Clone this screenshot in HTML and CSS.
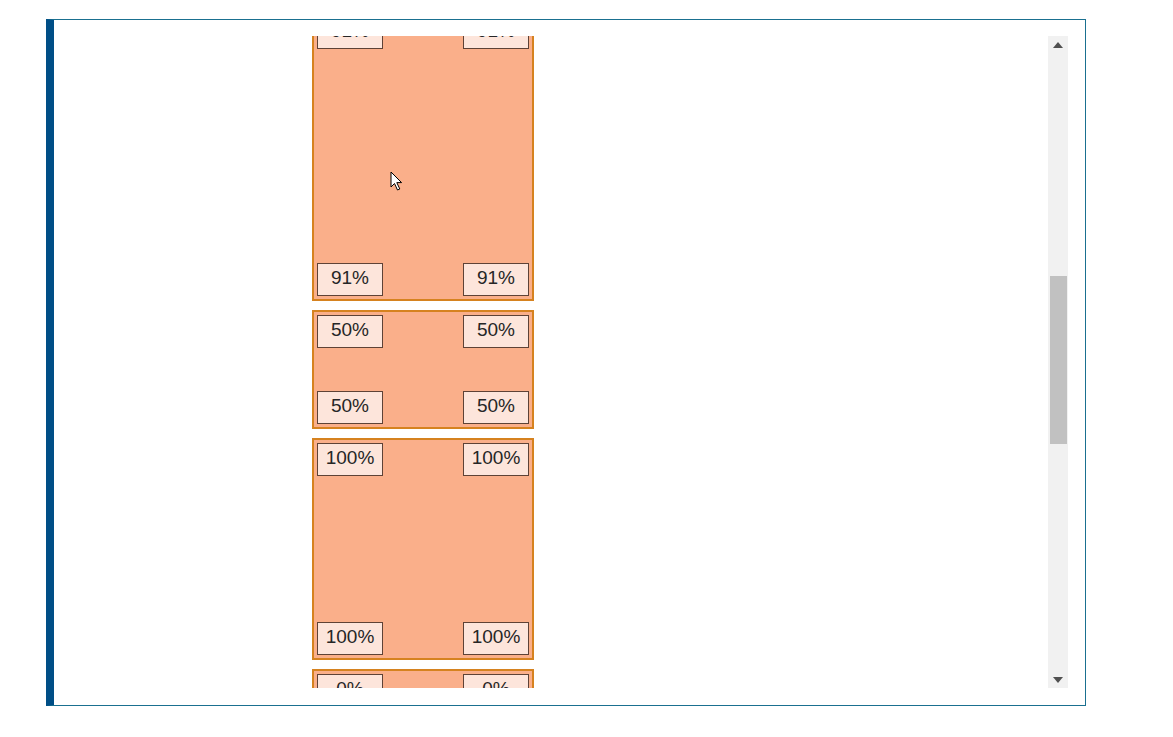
FILE: index.html
```html
<!DOCTYPE html>
<html lang="en">

<head>
    <meta charset="UTF-8">
    <meta name="viewport" content="width=device-width, initial-scale=1.0">
    <title>Corner Labels</title>
    <link rel="stylesheet" href="styles.css">
</head>

<body>

    <div id="frame">
        <!-- the scrolled list of boxes, already moved down a bit -->
        <div id="viewport">
            <div id="list">
                <div class="card" style="height: 290px;">
                    <div class="row">
                        <span class="tag">91%</span>
                        <span class="tag">91%</span>
                    </div>
                    <div class="row">
                        <span class="tag">91%</span>
                        <span class="tag">91%</span>
                    </div>
                </div>
                <div class="card" style="height: 119px;">
                    <div class="row">
                        <span class="tag">50%</span>
                        <span class="tag">50%</span>
                    </div>
                    <div class="row">
                        <span class="tag">50%</span>
                        <span class="tag">50%</span>
                    </div>
                </div>
                <div class="card" style="height: 222px;">
                    <div class="row">
                        <span class="tag">100%</span>
                        <span class="tag">100%</span>
                    </div>
                    <div class="row">
                        <span class="tag">100%</span>
                        <span class="tag">100%</span>
                    </div>
                </div>
                <div class="card" style="height: 119px;">
                    <div class="row">
                        <span class="tag">0%</span>
                        <span class="tag">0%</span>
                    </div>
                    <div class="row">
                        <span class="tag">0%</span>
                        <span class="tag">0%</span>
                    </div>
                </div>
            </div>
            <!-- mouse pointer caught in the shot -->
            <svg class="pointer" width="14" height="21" viewBox="0 0 14 21">
                <path d="M1 1 L1 16 L4.5 12.5 L7.5 19 L9.8 18 L6.8 11.6 L11.6 11.6 Z" fill="#fff" stroke="#000" stroke-width="1" stroke-linejoin="round"/>
            </svg>
        </div>
        <!-- our scrollbar drawn by hand -->
        <div id="scrollbar">
            <div class="arrow">
                <svg width="10" height="6" viewBox="0 0 10 6"><path d="M0 6 L5 0 L10 6 Z" fill="#505050"/></svg>
            </div>
            <div class="track">
                <div class="thumb"></div>
            </div>
            <div class="arrow">
                <svg width="10" height="6" viewBox="0 0 10 6"><path d="M0 0 L10 0 L5 6 Z" fill="#505050"/></svg>
            </div>
        </div>
    </div>

</body>

</html>
```

FILE: styles.css
```css
body {
    margin: 0;
    padding: 19px 0 0 46px;
    background-color: #ffffff;
    font-family: "Liberation Sans", Arial, sans-serif;
}

/* outer frame with the thick blue bar on the left */
#frame {
    width: 1014px;
    height: 652px;
    border: 1px solid #1a7090;
    border-left: 8px solid #004e86;
    padding: 16px 17px 17px 0;
    display: flex;
}

#viewport {
    flex: 1;
    overflow: hidden;
    position: relative;
}

#list {
    margin-top: -25px;
    padding-left: 258px;
    display: flex;
    flex-direction: column;
    gap: 9px;
}

/* one salmon box */
.card {
    width: 222px;
    box-sizing: border-box;
    background-color: #faaf8a;
    border: 2px solid #d6821f;
    padding: 3px;
    display: flex;
    flex-direction: column;
    justify-content: space-between;
}

.row {
    display: flex;
    justify-content: space-between;
}

/* small percent labels in the corners */
.tag {
    width: 66px;
    height: 33px;
    box-sizing: border-box;
    background-color: #fde5db;
    border: 1px solid #5e4236;
    color: #262626;
    font-size: 19px;
    line-height: 27px;
    text-align: center;
}

.pointer {
    position: absolute;
    left: 336px;
    top: 135px;
}

#scrollbar {
    width: 20px;
    background-color: #f1f1f1;
    display: flex;
    flex-direction: column;
}

.arrow {
    height: 17px;
    display: flex;
    align-items: center;
    justify-content: center;
}

.track {
    flex: 1;
    padding-top: 223px;
}

.thumb {
    width: 17px;
    height: 168px;
    margin-left: 2px;
    background-color: #c1c1c1;
}
```
